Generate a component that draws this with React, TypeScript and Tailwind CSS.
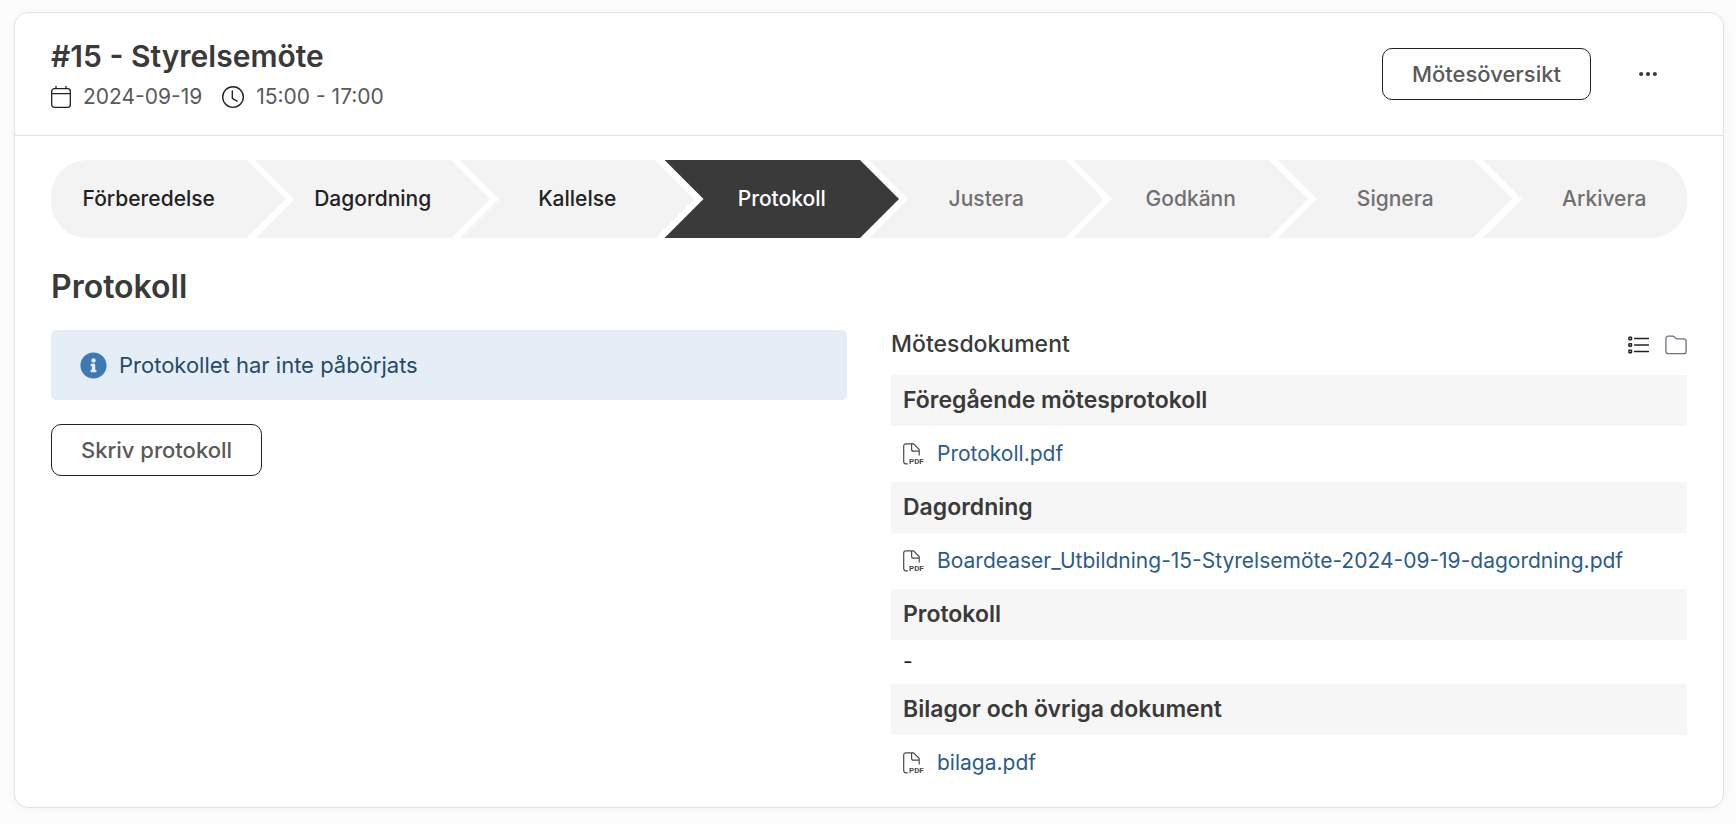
import clsx from 'clsx';
import React from 'react';
import { BsClock, BsThreeDots } from 'react-icons/bs';
import { FaInfoCircle } from 'react-icons/fa';

type StepState = 'done' | 'current' | 'upcoming';

interface Step {
  label: string;
  state: StepState;
}

interface DocumentGroup {
  title: string;
  files: string[];
}

const steps: Step[] = [
  { label: 'Förberedelse', state: 'done' },
  { label: 'Dagordning', state: 'done' },
  { label: 'Kallelse', state: 'done' },
  { label: 'Protokoll', state: 'current' },
  { label: 'Justera', state: 'upcoming' },
  { label: 'Godkänn', state: 'upcoming' },
  { label: 'Signera', state: 'upcoming' },
  { label: 'Arkivera', state: 'upcoming' },
];

const documentGroups: DocumentGroup[] = [
  { title: 'Föregående mötesprotokoll', files: ['Protokoll.pdf'] },
  { title: 'Dagordning', files: ['Boardeaser_Utbildning-15-Styrelsemöte-2024-09-19-dagordning.pdf'] },
  { title: 'Protokoll', files: [] },
  { title: 'Bilagor och övriga dokument', files: ['bilaga.pdf'] },
];

const stepColors: Record<StepState, string> = {
  done: 'bg-[#f3f3f3] text-[#222222]',
  current: 'bg-[#3a3a3a] text-white',
  upcoming: 'bg-[#f3f3f3] text-[#707070]',
};

const CalendarIcon: React.FC = () => (
  <svg width="20" height="22" viewBox="0 0 20 22" fill="none" stroke="#222222" strokeWidth="1.3" aria-hidden="true">
    <rect x="0.7" y="2.6" width="18.6" height="18.7" rx="2.6" />
    <path d="M0.7 7.6H19.3M5 0V3M15 0V3" />
  </svg>
);

const ListIcon: React.FC = () => (
  <svg width="21" height="18" viewBox="0 0 21 18" fill="none" stroke="#222222" aria-hidden="true">
    <path d="M6.6 2.5H20.4M6.6 9H20.4M6.6 15.5H20.4" strokeWidth="1.4" strokeLinecap="round" />
    <g strokeWidth="1.5">
      <rect x="0.9" y="1.2" width="2.6" height="2.6" rx="0.6" />
      <rect x="0.9" y="7.7" width="2.6" height="2.6" rx="0.6" />
      <rect x="0.9" y="14.2" width="2.6" height="2.6" rx="0.6" />
    </g>
  </svg>
);

const FolderIcon: React.FC = () => (
  <svg width="22" height="20" viewBox="0 0 22 20" fill="none" stroke="#6b737c" strokeWidth="1.3" aria-hidden="true">
    <path
      strokeLinejoin="round"
      d="M0.9 3.4a2.2 2.2 0 0 1 2.2-2.2h4.6c.7 0 1.2.2 1.7.7l1.3 1.2c.5.5 1 .7 1.7.7h6.5a2.2 2.2 0 0 1 2.2 2.2v10.4a2.2 2.2 0 0 1-2.2 2.2H3.1a2.2 2.2 0 0 1-2.2-2.2z"
    />
  </svg>
);

const PdfIcon: React.FC = () => (
  <svg width="21" height="22" viewBox="0 0 21 22" fill="none" stroke="#4a4a4a" strokeWidth="1.2" aria-hidden="true">
    <path d="M4.8 20.8H2.9a2.2 2.2 0 0 1-2.2-2.2V3a2.2 2.2 0 0 1 2.2-2.2h7.6l5.7 5.7v5.9M8.6 0.8v5.4a2 2 0 0 0 2 2h5.6" />
    <text x="6" y="21" fill="#4a4a4a" stroke="none" className="font-['Roboto',sans-serif] text-[8px] font-bold">
      PDF
    </text>
  </svg>
);

const OutlineButton: React.FC<{ children: React.ReactNode }> = ({ children }) => (
  <button
    type="button"
    className="h-[52px] rounded-[10px] border border-[#222222] bg-white px-[29px] text-[22px] font-medium text-[#5a5a5a]"
  >
    {children}
  </button>
);

const MeetingHeader: React.FC = () => (
  <header className="flex items-center justify-between border-b border-[#e2e2e2] px-9 pt-6 pb-6">
    <div>
      <h1 className="text-[30px] leading-[38px] font-semibold text-[#3a3a3a]">#15 - Styrelsemöte</h1>
      <div className="mt-2 flex h-7 items-center gap-5 text-[21px] text-[#5a5a5a]">
        <span className="flex items-center gap-3">
          <CalendarIcon />
          2024-09-19
        </span>
        <span className="flex items-center gap-3">
          <BsClock size={22} color="#222222" />
          15:00 - 17:00
        </span>
      </div>
    </div>
    <div className="flex items-center gap-[38px] pr-5">
      <OutlineButton>Mötesöversikt</OutlineButton>
      <button type="button" aria-label="Fler alternativ" className="p-2 text-[#3a3a3a]">
        <BsThreeDots size={22} />
      </button>
    </div>
  </header>
);

// Every step reaches 30px into the next column, where the next one is notched by 39px.
const MeetingSteps: React.FC = () => (
  <ol className="grid grid-cols-8 overflow-hidden rounded-[36px]">
    {steps.map((step, i) => (
      <li
        key={step.label}
        aria-current={step.state === 'current' ? 'step' : undefined}
        className={clsx(
          'flex h-[78px] items-center justify-center text-[21px] font-medium',
          stepColors[step.state],
          i === 0 &&
            '-mr-[30px] pr-[39px] [clip-path:polygon(0_0,calc(100%-39px)_0,100%_50%,calc(100%-39px)_100%,0_100%)]',
          i > 0 &&
            i < steps.length - 1 &&
            '-mr-[30px] [clip-path:polygon(0_0,calc(100%-39px)_0,100%_50%,calc(100%-39px)_100%,0_100%,39px_50%)]',
          i === steps.length - 1 && 'pl-[39px] [clip-path:polygon(0_0,100%_0,100%_100%,0_100%,39px_50%)]',
        )}
      >
        {step.label}
      </li>
    ))}
  </ol>
);

const MeetingDocuments: React.FC = () => (
  <section>
    <div className="flex h-[45px] items-start justify-between">
      <h3 className="text-[23px] leading-7 font-medium text-[#3a3a3a]">Mötesdokument</h3>
      <div className="flex h-[30px] items-center gap-4">
        <button type="button" aria-label="Visa som lista">
          <ListIcon />
        </button>
        <button type="button" aria-label="Visa som mappar">
          <FolderIcon />
        </button>
      </div>
    </div>
    {documentGroups.map((group) => (
      <div key={group.title}>
        <h4 className="bg-[#f6f6f6] px-3 py-3 text-[23px] leading-[27px] font-semibold text-[#3a3a3a]">
          {group.title}
        </h4>
        {group.files.length ? (
          group.files.map((file) => (
            <a key={file} href="#" className="flex h-14 items-center gap-[13px] px-3 text-[21px] text-[#2b5c8a]">
              <PdfIcon />
              {file}
            </a>
          ))
        ) : (
          <p className="px-3 py-2 text-[21px] leading-7 text-[#222222]">-</p>
        )}
      </div>
    ))}
  </section>
);

const App: React.FC = () => {
  return (
    <div className="min-h-screen bg-[#fcfcfc] pt-3 pr-3 pb-4 pl-[14px] font-['Inter',sans-serif]">
      <main className="rounded-[14px] border border-[#e2e2e2] bg-white shadow-[0_2px_12px_rgba(0,0,0,0.04)]">
        <MeetingHeader />
        <div className="px-9 pt-6 pb-4">
          <MeetingSteps />
          <h2 className="mt-[30px] text-[32px] leading-[38px] font-semibold text-[#3a3a3a]">Protokoll</h2>
          <div className="mt-6 grid grid-cols-2 gap-11">
            <div>
              <div className="flex h-[70px] items-center gap-3 rounded-[5px] bg-[#e5eef6] px-[29px] text-[22px] text-[#264a69]">
                <FaInfoCircle size={27} color="#3f79b4" />
                Protokollet har inte påbörjats
              </div>
              <div className="mt-6">
                <OutlineButton>Skriv protokoll</OutlineButton>
              </div>
            </div>
            <MeetingDocuments />
          </div>
        </div>
      </main>
    </div>
  );
};

export default App;
